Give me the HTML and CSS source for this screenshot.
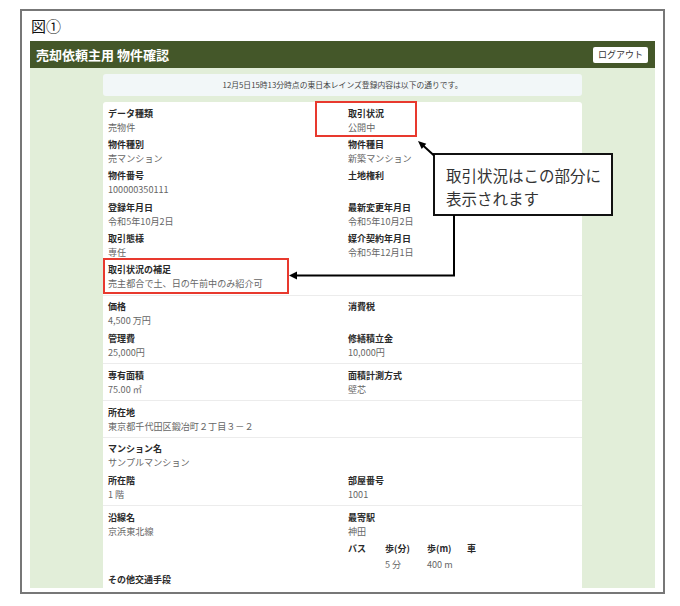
FILE: index.html
```html
<!DOCTYPE html>
<html lang="ja">
<head>
<meta charset="utf-8">
<title>売却依頼主用 物件確認</title>
<link rel="stylesheet" href="styles.css">
</head>
<body>
<div class="frame">
  <div class="fig-title">図①</div>
  <div class="panel">
    <div class="header">
      <div class="header-title">売却依頼主用 物件確認</div>
      <div class="logout">ログアウト</div>
    </div>
    <div class="content">
      <div class="notice">12月5日15時13分時点の東日本レインズ登録内容は以下の通りです。</div>
      <div class="card">
        <div class="section">
          <div class="field"><div class="label">データ種類</div><div class="value">売物件</div></div>
          <div class="field"><div class="label">取引状況</div><div class="value">公開中</div></div>
          <div class="field"><div class="label">物件種別</div><div class="value">売マンション</div></div>
          <div class="field"><div class="label">物件種目</div><div class="value">新築マンション</div></div>
          <div class="field"><div class="label">物件番号</div><div class="value">100000350111</div></div>
          <div class="field"><div class="label">土地権利</div><div class="value"></div></div>
          <div class="field"><div class="label">登録年月日</div><div class="value">令和5年10月2日</div></div>
          <div class="field"><div class="label">最新変更年月日</div><div class="value">令和5年10月2日</div></div>
          <div class="field"><div class="label">取引態様</div><div class="value">専任</div></div>
          <div class="field"><div class="label">媒介契約年月日</div><div class="value">令和5年12月1日</div></div>
          <div class="field full"><div class="label">取引状況の補足</div><div class="value">売主都合で土、日の午前中のみ紹介可</div></div>
        </div>
        <div class="section">
          <div class="field"><div class="label">価格</div><div class="value">4,500 万円</div></div>
          <div class="field"><div class="label">消費税</div><div class="value"></div></div>
          <div class="field"><div class="label">管理費</div><div class="value">25,000円</div></div>
          <div class="field"><div class="label">修繕積立金</div><div class="value">10,000円</div></div>
        </div>
        <div class="section">
          <div class="field"><div class="label">専有面積</div><div class="value">75.00 ㎡</div></div>
          <div class="field"><div class="label">面積計測方式</div><div class="value">壁芯</div></div>
        </div>
        <div class="section">
          <div class="field full"><div class="label">所在地</div><div class="value">東京都千代田区鍛冶町２丁目３－２</div></div>
        </div>
        <div class="section">
          <div class="field full"><div class="label">マンション名</div><div class="value">サンプルマンション</div></div>
          <div class="field"><div class="label">所在階</div><div class="value">1 階</div></div>
          <div class="field"><div class="label">部屋番号</div><div class="value">1001</div></div>
        </div>
        <div class="section">
          <div class="field"><div class="label">沿線名</div><div class="value">京浜東北線</div></div>
          <div class="field"><div class="label">最寄駅</div><div class="value">神田</div></div>
          <div class="field"></div>
          <div class="field bus">
            <div class="label">バス</div><div class="label">歩(分)</div><div class="label">歩(m)</div><div class="label">車</div>
            <div class="value"></div><div class="value">5 分</div><div class="value">400 m</div><div class="value"></div>
          </div>
          <div class="field full"><div class="label">その他交通手段</div><div class="value"></div></div>
        </div>
      </div>
    </div>
  </div>
</div>

<div class="redbox redbox-status"></div>
<div class="redbox redbox-note"></div>
<div class="callout">取引状況はこの部分に<br>表示されます</div>
<svg class="arrows" width="680" height="606" viewBox="0 0 680 606">
  <line x1="434" y1="155.5" x2="422" y2="144.5" stroke="#000" stroke-width="2"/>
  <polygon points="418,141 426.3,143.7 421.7,148.9" fill="#000"/>
  <polyline points="454,215 454,275.5 296,275.5" fill="none" stroke="#000" stroke-width="2"/>
  <polygon points="289,275.5 297,271.5 297,279.5" fill="#000"/>
</svg>
</body>
</html>
```

FILE: styles.css
```css
* { box-sizing: border-box; }

body {
  margin: 0;
  background: #fff;
  font-family: "Noto Sans CJK JP", "Noto Sans", sans-serif;
  color: #222;
  position: relative;
  width: 680px;
  height: 606px;
  overflow: hidden;
}

.frame {
  margin: 9px 0 0 20px;
  width: 645px;
  height: 585px;
  border: 2px solid #777;
  padding: 0 8px;
}

.fig-title {
  font-size: 15px;
  line-height: 30px;
  height: 30px;
  color: #111;
  padding-left: 1px;
}

.panel {
  height: 547px;
  overflow: hidden;
}

.header {
  height: 27px;
  background: #445729;
  display: flex;
  align-items: center;
  justify-content: space-between;
  padding: 0 7px 0 6px;
}

.header-title {
  color: #fff;
  font-size: 13px;
  font-weight: bold;
}

.logout {
  width: 55px;
  height: 16px;
  background: #fff;
  border-radius: 2px;
  font-size: 9px;
  line-height: 16px;
  text-align: center;
  color: #333;
}

.content {
  height: 520px;
  overflow: hidden;
  background: #e2eed9;
  padding: 6px 73px 0;
}

.notice {
  height: 22px;
  line-height: 22px;
  background: #f2f7f8;
  border-radius: 3px;
  text-align: center;
  font-size: 7.8px;
  color: #444;
}

.card {
  margin-top: 6px;
  background: #fff;
  border-radius: 3px 3px 0 0;
  min-height: 500px;
}

.section {
  display: grid;
  grid-template-columns: 240px 1fr;
  padding: 4.5px 5px 0;
  border-bottom: 1px solid #ececec;
}

.field {
  height: 31.4px;
}

.field.full {
  grid-column: 1 / span 2;
}

.label {
  font-size: 9px;
  line-height: 13px;
  height: 13px;
  font-weight: bold;
  color: #2a2a2a;
  white-space: nowrap;
}

.value {
  font-size: 9.1px;
  line-height: 14px;
  height: 14px;
  color: #666;
  white-space: nowrap;
}

.field.bus {
  display: grid;
  grid-template-columns: 37px 42px 40px 30px;
}

.redbox {
  position: absolute;
  border: 2px solid #e8392e;
}

.redbox-status {
  left: 315px;
  top: 101px;
  width: 102px;
  height: 36px;
}

.redbox-note {
  left: 103px;
  top: 258px;
  width: 186px;
  height: 36px;
}

.callout {
  position: absolute;
  left: 433px;
  top: 153px;
  width: 180px;
  height: 63px;
  background: #fff;
  border: 2px solid #111;
  padding: 8.5px 0 0 11px;
  font-size: 15.5px;
  line-height: 23px;
  color: #333;
  white-space: nowrap;
}

.arrows {
  position: absolute;
  left: 0;
  top: 0;
  pointer-events: none;
}
```
